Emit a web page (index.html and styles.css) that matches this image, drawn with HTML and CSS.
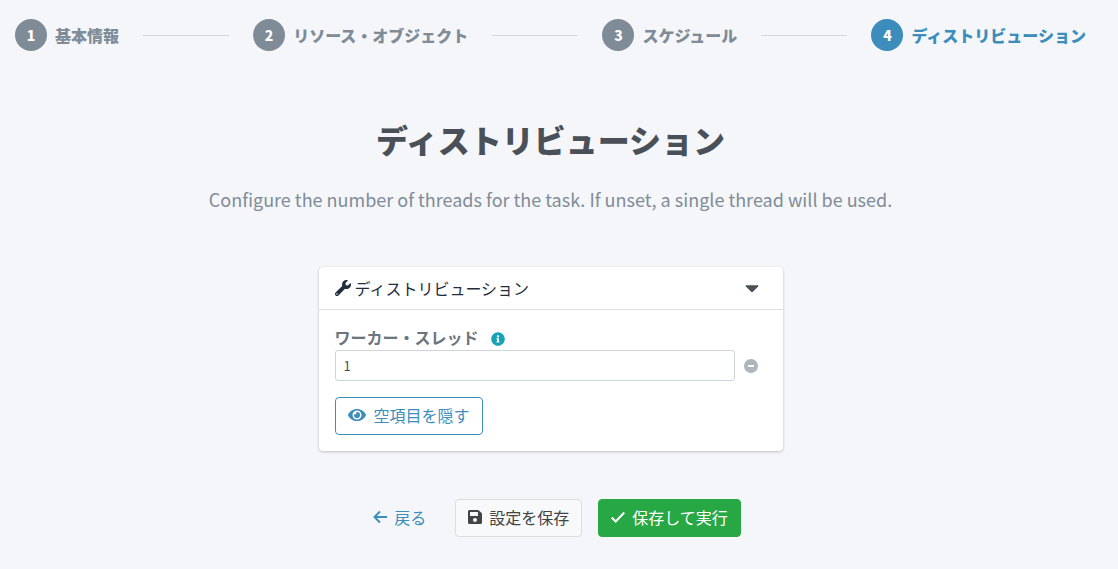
FILE: index.html
```html
<!DOCTYPE html>
<html lang="ja">
<head>
  <meta charset="UTF-8">
  <meta name="viewport" content="width=device-width, initial-scale=1.0">
  <title>ディストリビューション</title>
  <link rel="stylesheet" href="styles.css">
</head>
<body>
  <nav>
    <ol class="stepper">
      <li><a class="step" href="#basic"><span class="step-number">1</span>基本情報</a></li>
      <li class="line" role="presentation"></li>
      <li><a class="step" href="#resource"><span class="step-number">2</span>リソース・オブジェクト</a></li>
      <li class="line" role="presentation"></li>
      <li><a class="step" href="#schedule"><span class="step-number">3</span>スケジュール</a></li>
      <li class="line" role="presentation"></li>
      <li><a class="step active" href="#distribution" aria-current="step"><span class="step-number">4</span>ディストリビューション</a></li>
    </ol>
  </nav>

  <main>
    <h1>ディストリビューション</h1>
    <p class="lead">Configure the number of threads for the task. If unset, a single thread will be used.</p>

    <form id="distributionForm">
      <section class="card">
        <div class="card-header">
          <h2>
            <svg class="icon" viewBox="0 0 512 512" aria-hidden="true"><path d="M507.73 109.1c-2.24-9.03-13.54-12.09-20.12-5.51l-74.36 74.36-67.88-11.31-11.31-67.88 74.36-74.36c6.62-6.62 3.43-17.9-5.66-20.16-47.38-11.74-99.55.91-136.58 37.93-39.64 39.64-50.55 97.1-34.05 147.2L18.74 402.76c-24.99 24.99-24.99 65.51 0 90.5 24.99 24.99 65.51 24.99 90.5 0l213.21-213.21c50.12 16.71 107.47 5.68 147.37-34.22 37.07-37.07 49.7-89.32 37.91-136.73zM64 472c-13.25 0-24-10.75-24-24 0-13.26 10.75-24 24-24s24 10.74 24 24c0 13.25-10.75 24-24 24z"/></svg>
            ディストリビューション
          </h2>
          <button type="button" class="icon-button toggle" aria-label="Toggle">
            <svg viewBox="0 0 12 8" aria-hidden="true"><path d="M1 1h10c.8 0 1 .8.5 1.3L7 6.600c-.6.6-1.400.6-2 0L.5 2.300C0 1.800.2 1 1 1z"/></svg>
          </button>
        </div>
        <div class="card-body">
          <div class="label-row">
            <label for="threads">ワーカー・スレッド</label>
            <svg class="info" viewBox="0 0 512 512" aria-hidden="true"><path d="M256 8C119.043 8 8 119.083 8 256c0 136.997 111.043 248 248 248s248-111.003 248-248C504 119.083 392.957 8 256 8zm0 110c23.196 0 42 18.804 42 42s-18.804 42-42 42-42-18.804-42-42 18.804-42 42-42zm56 254c0 6.627-5.373 12-12 12h-88c-6.627 0-12-5.373-12-12v-24c0-6.627 5.373-12 12-12h12v-64h-12c-6.627 0-12-5.373-12-12v-24c0-6.627 5.373-12 12-12h64c6.627 0 12 5.373 12 12v100h12c6.627 0 12 5.373 12 12v24z"/></svg>
          </div>
          <div class="input-row">
            <input type="text" id="threads" value="1">
            <button type="button" class="icon-button remove" aria-label="Remove">
              <svg viewBox="0 0 14 14" aria-hidden="true"><path fill-rule="evenodd" d="M7 0a7 7 0 1 0 0 14A7 7 0 0 0 7 0zM4.500 6h5a.5.5 0 0 1 .5.5v1a.5.5 0 0 1-.5.5h-5a.5.5 0 0 1-.5-.5v-1a.5.5 0 0 1 .5-.5z"/></svg>
            </button>
          </div>
          <button type="button" class="btn btn-outline">
            <svg class="icon-wide" viewBox="0 0 576 512" aria-hidden="true"><path d="M572.52 241.4C518.29 135.59 410.93 64 288 64S57.68 135.64 3.48 241.41a32.35 32.35 0 0 0 0 29.19C57.71 376.41 165.07 448 288 448s230.32-71.64 284.52-177.41a32.35 32.35 0 0 0 0-29.19zM288 400a144 144 0 1 1 144-144 143.93 143.93 0 0 1-144 144zm0-240a95.31 95.31 0 0 0-25.31 3.79 47.85 47.85 0 0 1-66.9 66.9A95.78 95.78 0 1 0 288 160z"/></svg>
            空項目を隠す
          </button>
        </div>
      </section>

      <div class="actions">
        <a class="btn btn-link" href="#schedule">
          <svg class="icon-small" viewBox="0 0 14 16" aria-hidden="true"><path class="stroke" d="M14 8H1.500M7 2.500L1.500 8 7 13.500"/></svg>
          戻る
        </a>
        <button type="button" class="btn btn-light">
          <svg class="icon-small" viewBox="0 0 448 512" aria-hidden="true"><path d="M433.941 129.941l-83.882-83.882A48 48 0 0 0 316.118 32H48C21.490 32 0 53.490 0 80v352c0 26.510 21.490 48 48 48h352c26.510 0 48-21.490 48-48V163.882a48 48 0 0 0-14.059-33.941zM224 416c-35.346 0-64-28.654-64-64 0-35.346 28.654-64 64-64s64 28.654 64 64c0 35.346-28.654 64-64 64zm96-304.520V212c0 6.627-5.373 12-12 12H76c-6.627 0-12-5.373-12-12V108c0-6.627 5.373-12 12-12h228.520c3.183 0 6.235 1.264 8.485 3.515l3.480 3.480A11.996 11.996 0 0 1 320 111.480z"/></svg>
          設定を保存
        </button>
        <button type="submit" class="btn btn-success">
          <svg class="icon-small" viewBox="0 0 14 16" aria-hidden="true"><path class="stroke" d="M.7 8.500l4 4 8.600-9"/></svg>
          保存して実行
        </button>
      </div>
    </form>
  </main>
</body>
</html>
```

FILE: styles.css
```css
* {
  box-sizing: border-box;
}
body {
  margin: 0;
  padding: 0 32px 32px 15px;
  font-family: "Noto Sans CJK JP", sans-serif;
  font-size: 16px;
  line-height: 22px;
  color: #495057;
  background-color: #f4f6f9;
}
h1, h2, p {
  margin: 0;
}
svg {
  display: block;
  flex: none;
  fill: currentColor;
}
button, input {
  font-family: inherit;
}
.stepper {
  display: flex;
  align-items: center;
  gap: 24px;
  height: 70px;
  margin: 0;
  padding: 0;
  list-style: none;
}
.line {
  flex: 1;
  height: 1px;
  background-color: #d3d7db;
}
.step {
  display: flex;
  align-items: center;
  gap: 8px;
  color: #7f8c98;
  font-weight: 900;
  text-decoration: none;
  white-space: nowrap;
}
.step-number {
  width: 32px;
  height: 32px;
  border-radius: 50%;
  background-color: #7f8c98;
  color: #fff;
  font-size: 14px;
  line-height: 32px;
  text-align: center;
}
.active {
  color: #3c8dbc;
}
.active .step-number {
  background-color: #3c8dbc;
}
main {
  padding-top: 47px;
}
h1 {
  font-size: 32px;
  font-weight: 900;
  line-height: 44px;
  text-align: center;
}
.lead {
  margin-top: 24px;
  color: #7f8c98;
  font-size: 18px;
  font-weight: 400;
  line-height: 28px;
  text-align: center;
}
.card {
  max-width: 464px;
  margin: 54px auto 48px;
  border-radius: 4px;
  background-color: #fff;
  box-shadow: 0 0 1px rgba(0, 0, 0, 0.13), 0 1px 3px rgba(0, 0, 0, 0.2);
}
.card-header {
  display: flex;
  align-items: center;
  justify-content: space-between;
  height: 43px;
  padding: 0 24px 0 16px;
  border-bottom: 1px solid #dfdfdf;
}
h2 {
  display: flex;
  align-items: center;
  gap: 4px;
  color: #1f2d3d;
  font-size: 16px;
  font-weight: 400;
}
.icon {
  width: 16px;
  height: 16px;
}
.icon-wide {
  width: 18px;
  height: 16px;
}
.icon-small {
  width: 14px;
  height: 16px;
}
.icon-button {
  padding: 0;
  border: 0;
  background: none;
  cursor: pointer;
}
.toggle {
  color: #495057;
}
.toggle svg {
  width: 14px;
  height: 9px;
}
.card-body {
  padding: 16px;
}
.label-row {
  display: flex;
  align-items: center;
  gap: 12px;
  padding-bottom: 2px;
  color: #6c757d;
  font-weight: 700;
}
.info {
  width: 14px;
  height: 14px;
  margin-top: 4px;
  color: #17a2b8;
}
.input-row {
  display: flex;
  align-items: center;
  gap: 9px;
  margin-bottom: 16px;
  padding-right: 9px;
}
input {
  flex: 1;
  min-width: 0;
  height: 31px;
  padding: 0 8px;
  border: 1px solid #ced4da;
  border-radius: 3px;
  background-color: #fff;
  color: #495057;
  font-size: 13px;
}
.remove {
  color: #adb5bd;
}
.remove svg {
  width: 14px;
  height: 14px;
}
.btn {
  display: flex;
  align-items: center;
  gap: 8px;
  height: 38px;
  padding: 0 12px 2px;
  border: 1px solid transparent;
  border-radius: 4px;
  font-size: 16px;
  font-weight: 400;
  line-height: 22px;
  text-decoration: none;
  white-space: nowrap;
  cursor: pointer;
}
.btn-outline {
  border-color: #3c8dbc;
  background-color: #fff;
  color: #3c8dbc;
}
.btn-link {
  color: #3c8dbc;
}
.btn-light {
  border-color: #ddd;
  background-color: #f8f9fa;
  color: #444;
}
.btn-success {
  border-color: #28a745;
  background-color: #28a745;
  color: #fff;
}
.stroke {
  fill: none;
  stroke: currentColor;
  stroke-width: 2;
}
.actions {
  display: flex;
  justify-content: center;
  gap: 16px;
}
.actions .btn {
  gap: 7px;
}
```
